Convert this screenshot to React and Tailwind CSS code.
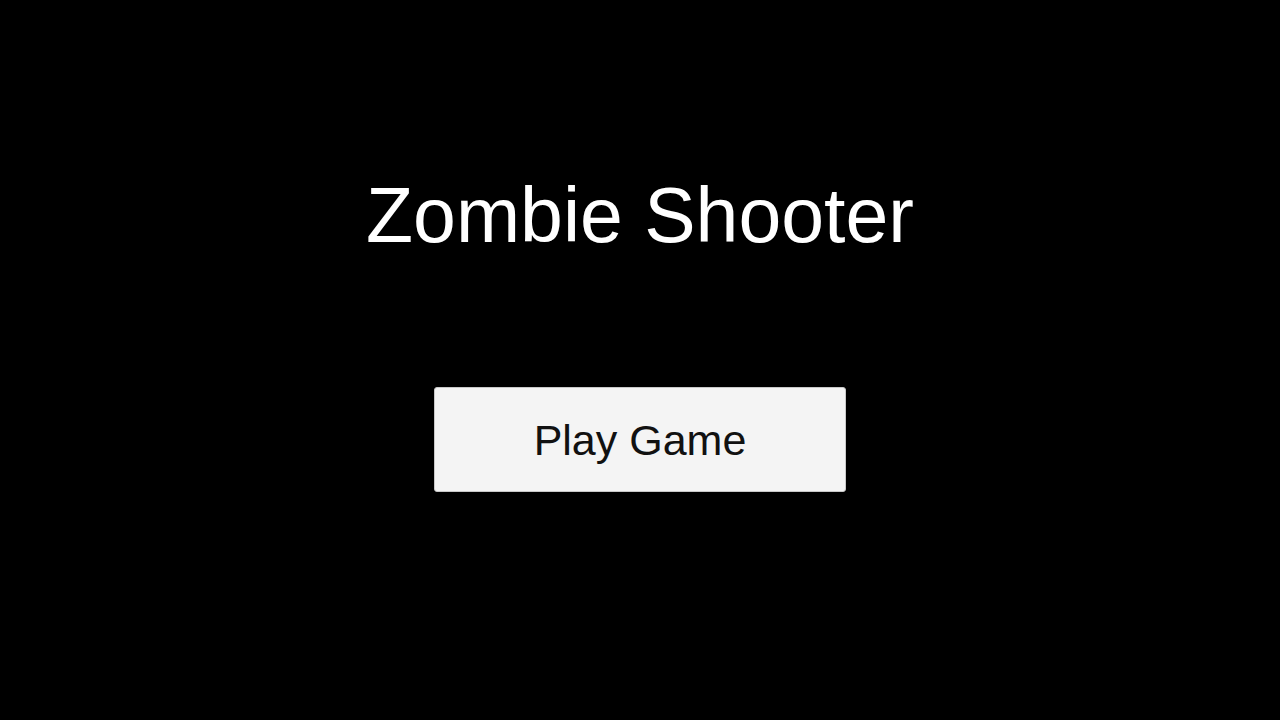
export default function App() {
  return (
    <div className="min-h-screen w-full bg-black flex flex-col items-center pt-[177px] font-['Liberation_Sans',Arial,sans-serif]">
      <h1 className="text-[77px] leading-none text-white font-normal">Zombie Shooter</h1>
      <button className="mt-[133px] w-[412px] h-[105px] flex items-center justify-center pt-[2px] bg-[#f4f4f4] border border-[#c8c8c8] rounded-[3px] text-[43px] leading-none text-[#111111]">
        Play Game
      </button>
    </div>
  );
}
